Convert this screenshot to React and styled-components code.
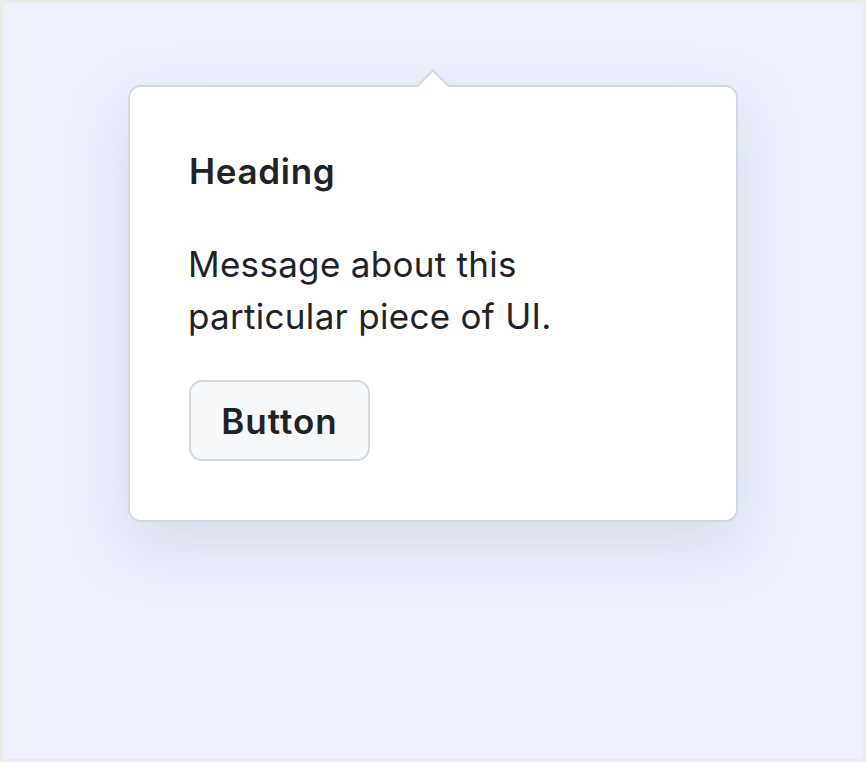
import React from "react";
import styled, { createGlobalStyle } from "styled-components";

const GlobalStyle = createGlobalStyle`
  html, body {
    margin: 0;
    padding: 0;
  }
  body {
    font-family: Inter, "Noto Sans", "Liberation Sans", sans-serif;
    color: #1f2328;
  }
  * {
    box-sizing: border-box;
  }
`;

const Frame = styled.div`
  width: 866px;
  height: 762px;
  border: 3px solid #ebebeb;
  background-color: #eef0fe;
  padding: 82px 0 0 125px;
`;

const Popover = styled.div`
  position: relative;
  width: 610px;
  padding: 58px 60px 59px 59px;
  background-color: #ffffff;
  border: 2px solid #d1d9e0;
  border-radius: 13px;
  box-shadow: 0 22px 60px rgba(140, 149, 159, 0.24);

  &::before,
  &::after {
    content: "";
    position: absolute;
    left: 50%;
    border: 16px solid transparent;
    transform: translateX(-50%);
  }
  &::before {
    top: -34px;
    border-bottom-color: #d1d9e0;
  }
  &::after {
    top: -31px;
    border-bottom-color: #ffffff;
  }
`;

const Heading = styled.h4`
  margin: 0 0 41px;
  font-size: 35px;
  font-weight: 600;
  line-height: 52px;
  letter-spacing: 0.7px;
`;

const Message = styled.p`
  margin: 0 0 38px -1px;
  max-width: 440px;
  font-size: 35px;
  line-height: 52px;
  letter-spacing: 0.3px;
`;

const Button = styled.button`
  display: inline-flex;
  align-items: center;
  justify-content: center;
  width: 181px;
  height: 81px;
  padding: 0 0 0 0;
  font-family: inherit;
  font-size: 35px;
  font-weight: 600;
  letter-spacing: 1px;
  color: #1f2328;
  background-color: #f6f8fa;
  border: 2px solid #d1d9e0;
  border-radius: 13px;
  cursor: pointer;
`;

export default function App() {
  return (
    <>
      <GlobalStyle />
      <Frame>
        <Popover>
          <Heading>Heading</Heading>
          <Message>Message about this particular piece of UI.</Message>
          <Button>Button</Button>
        </Popover>
      </Frame>
    </>
  );
}
